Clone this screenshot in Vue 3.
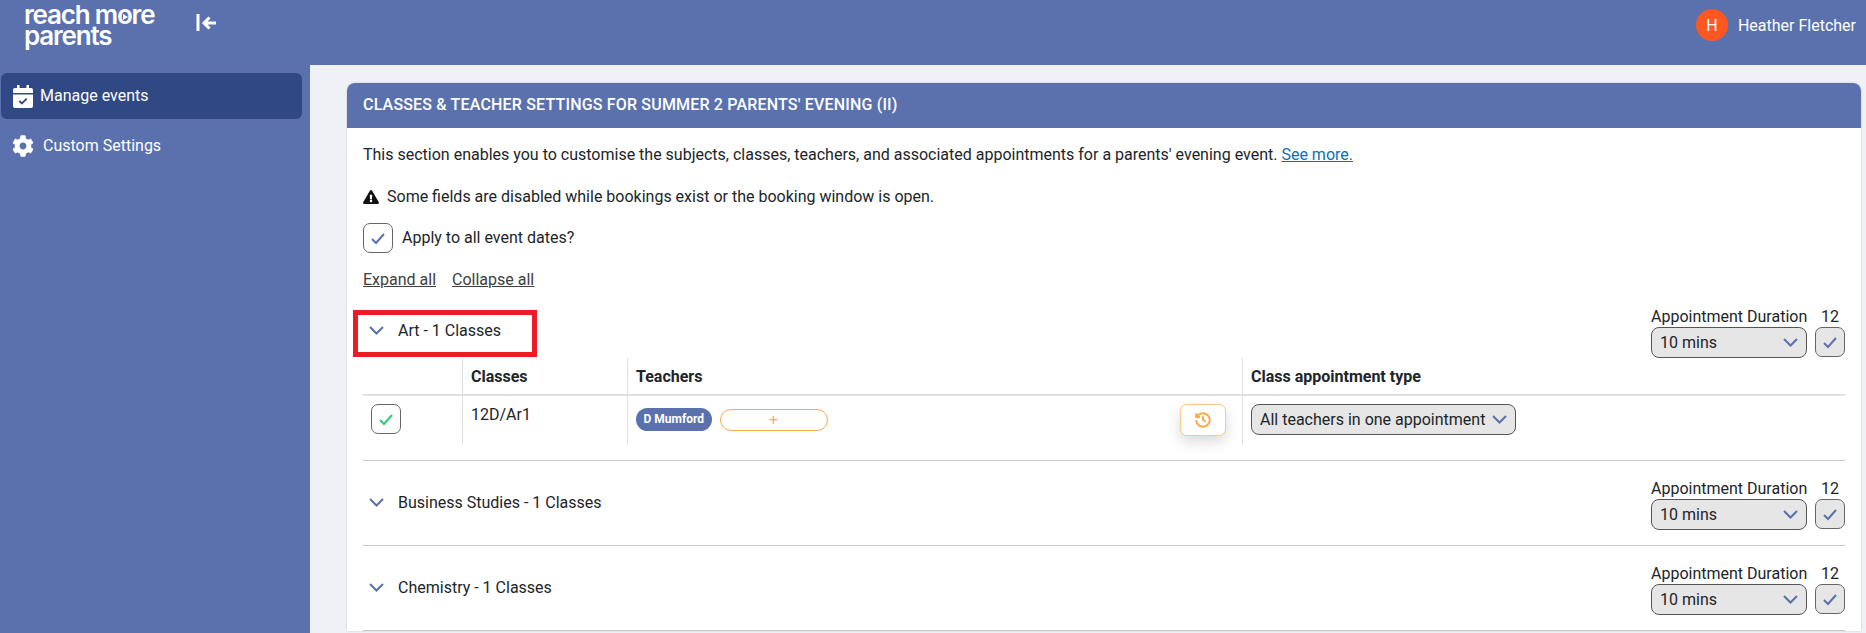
<template>
  <div class="page">
    <header class="topbar">
      <div class="logo">
        <span>reach m<span class="logo-o">o<i></i></span>re</span>
        <span>parents</span>
      </div>
      <button class="collapse">
        <svg width="22" height="18" viewBox="0 0 22 18" fill="none" stroke="#fff" stroke-width="3">
          <path d="M3 0v17" />
          <path d="M21 9H9M14.500 3.500 9 9l5.500 5.500" />
        </svg>
      </button>
      <div class="user">
        <span class="avatar">H</span>
        <span>Heather Fletcher</span>
      </div>
    </header>

    <div class="body">
      <aside class="sidebar">
        <a class="nav-item active">
          <svg width="20" height="23" viewBox="0 0 20 23">
            <path fill="#fff" d="M4 0h2.500v3h7V0H16v3h2a2 2 0 0 1 2 2v3H0V5a2 2 0 0 1 2-2h2zM0 9.500h20V21a2 2 0 0 1-2 2H2a2 2 0 0 1-2-2z" />
            <path fill="none" stroke="#304883" stroke-width="1.800" d="m6.300 16 2.600 2.500 4.800-4.800" />
          </svg>
          Manage events
        </a>
        <a class="nav-item settings">
          <svg width="22" height="22" viewBox="0 0 512 512">
            <path fill="#fff" d="M487.400 315.700l-42.600-24.600c4.300-23.200 4.300-47 0-70.200l42.600-24.600c4.900-2.800 7.100-8.600 5.500-14-11.100-35.600-30-67.800-54.700-94.600-3.800-4.100-10-5.100-14.800-2.300L380.800 110c-17.900-15.400-38.500-27.300-60.800-35.100V25.800c0-5.600-3.900-10.500-9.400-11.700-36.700-8.200-74.300-7.800-109.200 0-5.500 1.200-9.400 6.100-9.400 11.700V75c-22.200 7.900-42.800 19.800-60.800 35.100L88.700 85.500c-4.900-2.800-11-1.900-14.800 2.300-24.700 26.700-43.600 58.900-54.700 94.600-1.700 5.400.6 11.200 5.500 14L67.300 221c-4.300 23.200-4.300 47 0 70.200l-42.600 24.600c-4.900 2.800-7.100 8.600-5.500 14 11.100 35.600 30 67.800 54.700 94.600 3.800 4.100 10 5.100 14.800 2.300l42.600-24.600c17.900 15.400 38.500 27.300 60.800 35.100v49.200c0 5.600 3.900 10.500 9.400 11.700 36.700 8.200 74.300 7.800 109.200 0 5.500-1.200 9.400-6.100 9.400-11.700v-49.200c22.200-7.900 42.800-19.800 60.800-35.100l42.600 24.600c4.900 2.800 11 1.900 14.800-2.300 24.700-26.700 43.600-58.900 54.700-94.600 1.500-5.500-.7-11.300-5.600-14.100zM256 336c-44.100 0-80-35.900-80-80s35.900-80 80-80 80 35.900 80 80-35.900 80-80 80z" />
          </svg>
          Custom Settings
        </a>
      </aside>

      <main class="main">
        <section class="card">
          <h1 class="card-title">CLASSES &amp; TEACHER SETTINGS FOR SUMMER 2 PARENTS' EVENING (II)</h1>
          <div class="card-body">
            <p class="intro">
              This section enables you to customise the subjects, classes, teachers, and associated appointments for a parents' evening event.
              <a class="see-more">See more.</a>
            </p>
            <p class="warning">
              <svg width="16" height="14" viewBox="0 0 576 512">
                <path fill="#111" d="M569.517 440.013C587.975 472.007 564.806 512 527.940 512H48.054c-36.937 0-59.999-40.055-41.577-71.987L246.423 23.985c18.467-32.009 64.720-31.951 83.154 0l239.940 416.028zM288 354c-25.405 0-46 20.595-46 46s20.595 46 46 46 46-20.595 46-46-20.595-46-46-46zm-43.673-165.346l7.418 136c.347 6.364 5.609 11.346 11.982 11.346h48.546c6.373 0 11.635-4.982 11.982-11.346l7.418-136c.375-6.874-5.098-12.654-11.982-12.654h-63.383c-6.884 0-12.356 5.780-11.981 12.654z" />
              </svg>
              Some fields are disabled while bookings exist or the booking window is open.
            </p>
            <div class="apply">
              <span class="check">
                <svg width="16" height="13" viewBox="0 0 16 13" fill="none" stroke="#5a71ad" stroke-width="2"><path d="m2 7 4 4 8-9" /></svg>
              </span>
              <span class="apply-label">Apply to all event dates?</span>
            </div>
            <div class="toggles">
              <a>Expand all</a>
              <a>Collapse all</a>
            </div>

            <div v-for="group in groups" :key="group.name" class="group">
              <div class="group-head">
                <div class="group-title">
                  <svg width="15" height="9" viewBox="0 0 15 9" fill="none" stroke="#5a71ad" stroke-width="2"><path d="m1 1 6.500 6.500L14 1" /></svg>
                  <span>{{ group.name }} - 1 Classes</span>
                  <i v-if="group.marked" class="marker"></i>
                </div>
                <div class="duration">
                  <div class="duration-labels">
                    <span>Appointment Duration</span>
                    <span>12</span>
                  </div>
                  <div class="duration-controls">
                    <div class="select mins">
                      10 mins
                      <svg width="15" height="9" viewBox="0 0 15 9" fill="none" stroke="#5a71ad" stroke-width="2"><path d="m1 1 6.500 6.500L14 1" /></svg>
                    </div>
                    <span class="check small">
                      <svg width="16" height="13" viewBox="0 0 16 13" fill="none" stroke="#5a71ad" stroke-width="2"><path d="m2 7 4 4 8-9" /></svg>
                    </span>
                  </div>
                </div>
              </div>

              <div v-if="group.rows" class="table">
                <div class="cell th first"></div>
                <div class="cell th">Classes</div>
                <div class="cell th">Teachers</div>
                <div class="cell th">Class appointment type</div>
                <template v-for="row in group.rows" :key="row.code">
                  <div class="cell first">
                    <span class="check">
                      <svg width="16" height="13" viewBox="0 0 16 13" fill="none" stroke="#2ecc71" stroke-width="2"><path d="m2 7 4 4 8-9" /></svg>
                    </span>
                  </div>
                  <div class="cell code">{{ row.code }}</div>
                  <div class="cell teachers">
                    <span class="pill">{{ row.teacher }}</span>
                    <button class="add">+</button>
                    <button class="history">
                      <svg width="18" height="18" viewBox="0 0 24 24" fill="none" stroke="#f9a84d" stroke-width="2.600">
                        <path d="M3 12a9 9 0 1 0 9-9 9.750 9.750 0 0 0-6.740 2.740L3 8" />
                        <path d="M3 3v5h5M12 7v5l4 2" />
                      </svg>
                    </button>
                  </div>
                  <div class="cell">
                    <div class="select type">
                      All teachers in one appointment
                      <svg width="15" height="9" viewBox="0 0 15 9" fill="none" stroke="#5a71ad" stroke-width="2"><path d="m1 1 6.500 6.500L14 1" /></svg>
                    </div>
                  </div>
                </template>
              </div>
            </div>
          </div>
        </section>
      </main>
    </div>
  </div>
</template>

<script setup>
const groups = [
  { name: 'Art', marked: true, rows: [{ code: '12D/Ar1', teacher: 'D Mumford' }] },
  { name: 'Business Studies' },
  { name: 'Chemistry' }
]
</script>

<style>
html, body {
  margin: 0;
  overflow: hidden;
}
</style>

<style scoped>
.page {
  height: 633px;
  overflow: hidden;
  display: flex;
  flex-direction: column;
  font-family: Roboto, sans-serif;
  font-size: 16px;
  color: #212529;
  background: #5a71ad;
}

.topbar {
  height: 65px;
  flex: none;
  display: flex;
  align-items: flex-start;
  color: #fff;
}

.logo {
  width: 170px;
  margin-left: 24px;
  margin-top: 4px;
  display: flex;
  flex-direction: column;
  font-family: Inter, sans-serif;
  font-weight: 600;
  font-size: 26px;
  line-height: 21px;
  letter-spacing: -1.2px;
}

.logo-o {
  position: relative;
}

.logo-o i {
  position: absolute;
  left: 6px;
  top: 15px;
  border-left: 5px solid #fff;
  border-top: 3px solid transparent;
  border-bottom: 3px solid transparent;
}

.collapse {
  margin: 14px 0 0 1px;
  padding: 0;
  background: none;
  border: none;
  display: flex;
}

.user {
  margin-left: auto;
  margin-right: 10px;
  margin-top: 9px;
  display: flex;
  align-items: center;
  gap: 10px;
}

.avatar {
  width: 32px;
  height: 32px;
  border-radius: 50%;
  background: #ff5722;
  display: flex;
  align-items: center;
  justify-content: center;
}

.body {
  flex: 1;
  display: flex;
  min-height: 0;
}

.sidebar {
  width: 310px;
  flex: none;
  padding: 8px 8px 0 1px;
  box-sizing: border-box;
  color: #fff;
}

.nav-item {
  height: 46px;
  display: flex;
  align-items: center;
  gap: 7px;
  padding-left: 12px;
  border-radius: 6px;
  line-height: 44px;
}

.nav-item.active {
  background: #304883;
}

.nav-item.settings {
  margin-top: 4px;
  gap: 9px;
  padding-left: 11px;
}

.main {
  flex: 1;
  min-width: 0;
  background: #eff1f6;
  padding: 18px 5px 0 37px;
}

.card {
  background: #fff;
  border-radius: 8px 8px 0 0;
  box-shadow: 0 0 2px rgba(0, 0, 0, 0.2);
}

.card-title {
  margin: 0;
  height: 45px;
  line-height: 44px;
  padding-left: 16px;
  background: #5a71ad;
  border-radius: 8px 8px 0 0;
  color: #fff;
  font-size: 16px;
  font-weight: 500;
  letter-spacing: 0.18px;
}

.card-body {
  padding: 0 16px;
}

.intro {
  margin: 0;
  padding-top: 17px;
  line-height: 20px;
}

.see-more {
  color: #0d6fb8;
  text-decoration: underline;
}

.warning {
  margin: 22px 0 0;
  line-height: 20px;
  display: flex;
  align-items: center;
  gap: 8px;
}

.apply {
  margin-top: 16px;
  display: flex;
  align-items: center;
  gap: 9px;
}

.apply-label {
  line-height: 29px;
  height: 30px;
}

.check {
  width: 30px;
  height: 30px;
  box-sizing: border-box;
  border: 1px solid #666;
  border-radius: 7px;
  background: #fff;
  display: inline-flex;
  align-items: center;
  justify-content: center;
}

.check.small {
  background: #e6e6e6;
}

.toggles {
  margin-top: 17px;
  height: 19px;
  display: flex;
  gap: 16px;
  line-height: 20px;
  color: #404040;
  text-decoration: underline;
}

.group {
  border-bottom: 1px solid #c8c8c8;
  padding-bottom: 15px;
}

.group-head {
  height: 69px;
  padding-top: 19px;
  box-sizing: border-box;
  display: flex;
  justify-content: space-between;
}

.group-title {
  height: 44px;
  position: relative;
  display: flex;
  align-items: center;
  gap: 14px;
  padding-left: 6px;
}

.marker {
  position: absolute;
  left: -10px;
  top: 2px;
  width: 184px;
  height: 47px;
  box-sizing: border-box;
  border: 5px solid #ed1c24;
}

.duration {
  width: 194px;
}

.duration-labels {
  height: 19px;
  line-height: 17px;
  display: flex;
  justify-content: space-between;
  padding-right: 6px;
}

.duration-controls {
  display: flex;
  gap: 8px;
}

.select {
  height: 31px;
  box-sizing: border-box;
  border: 1px solid #555;
  border-radius: 8px;
  background: #e6e6e6;
  display: flex;
  align-items: center;
  justify-content: space-between;
  padding: 0 8px;
}

.mins {
  width: 156px;
}

.type {
  width: 265px;
}

.table {
  display: grid;
  grid-template-columns: 99px 165px 615px 1fr;
}

.cell {
  padding: 8px 8px 0;
  border-left: 1px solid #e0e0e0;
  height: 49px;
  box-sizing: border-box;
  display: flex;
  align-items: flex-start;
}

.cell.th {
  height: 38px;
  padding-top: 0;
  align-items: center;
  font-weight: 700;
  border-bottom: 2px solid #e0e0e0;
}

.cell.first {
  border-left: none;
}

.cell.code {
  padding-top: 9px;
}

.teachers {
  gap: 8px;
  padding-top: 12px;
}

.pill {
  height: 23px;
  line-height: 23px;
  padding: 0 7.5px;
  border-radius: 12px;
  background: #5a71ad;
  color: #fff;
  font-size: 12px;
  font-weight: 700;
}

.add {
  width: 108px;
  height: 22px;
  margin-top: 1px;
  padding: 0;
  border: 1px solid #f9a84d;
  border-radius: 11px;
  background: #fff;
  color: #f9a84d;
  font-size: 16px;
  line-height: 18px;
}

.history {
  margin-left: auto;
  margin-right: 8px;
  margin-top: -4px;
  width: 46px;
  height: 32px;
  border: 1px solid #f9c98a;
  border-radius: 7px;
  background: #fff;
  box-shadow: 0 6px 14px rgba(0, 0, 0, 0.15);
  display: flex;
  align-items: center;
  justify-content: center;
}
</style>
